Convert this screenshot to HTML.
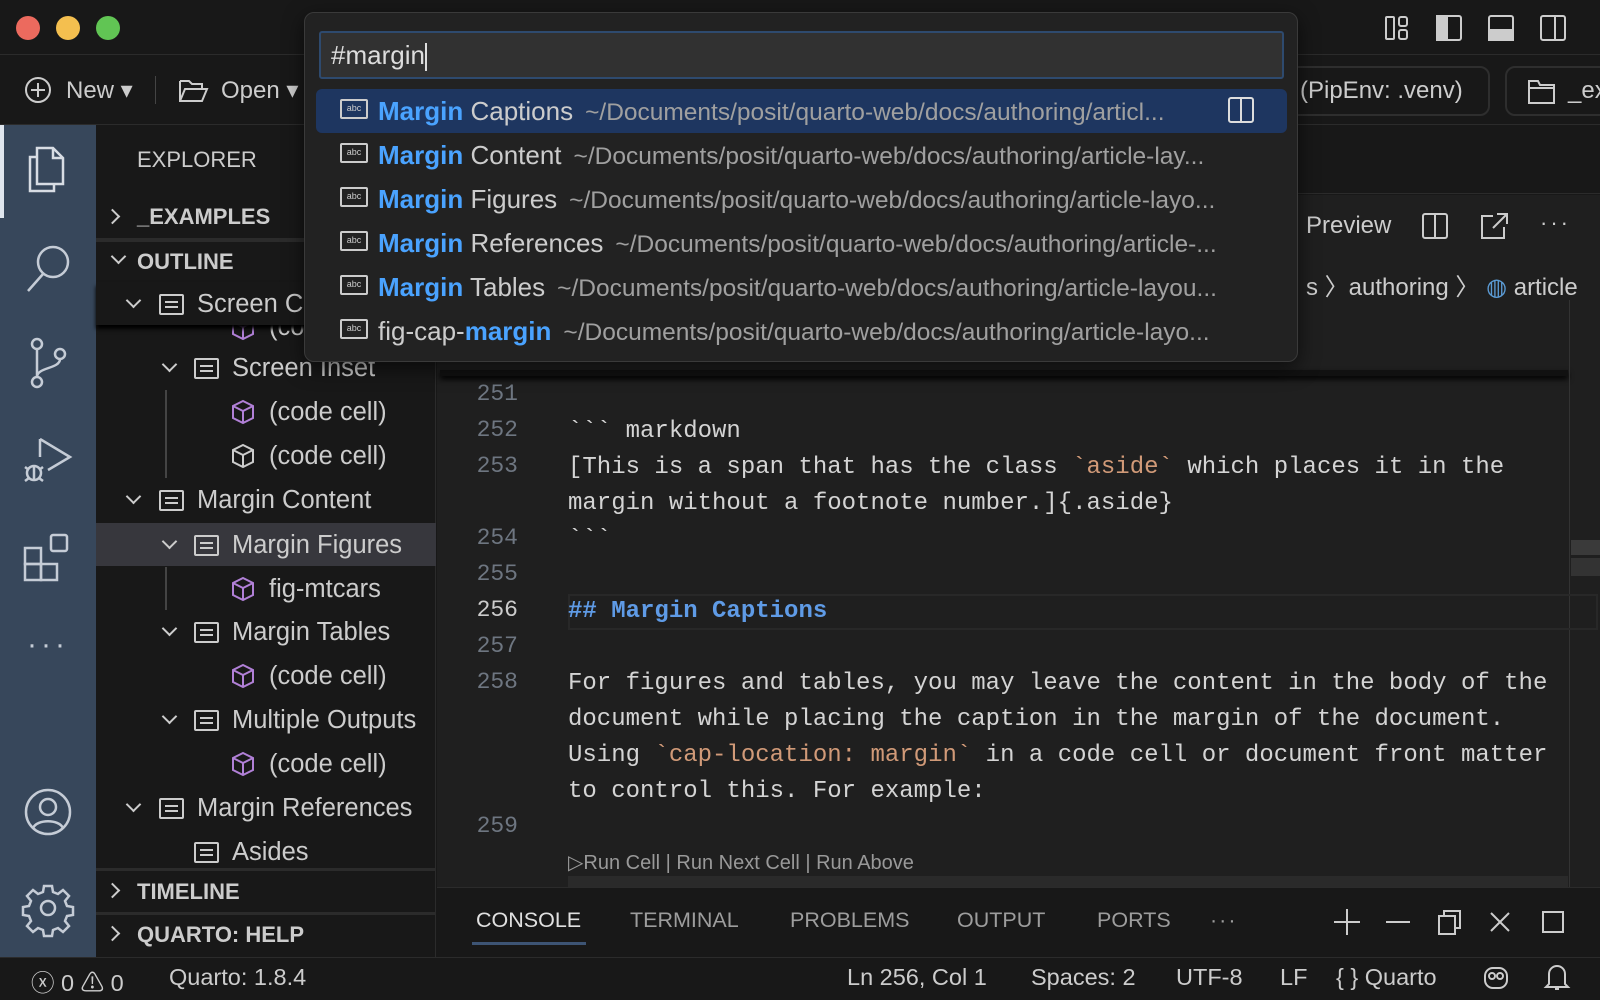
<!DOCTYPE html>
<html><head><meta charset="utf-8"><style>
*{margin:0;padding:0;box-sizing:border-box}
body{width:1600px;height:1000px;background:#181818;font-family:"Liberation Sans",sans-serif;color:#ccc;position:relative;overflow:hidden}
.a{position:absolute;white-space:nowrap}
.mono{font-family:"Liberation Mono",monospace;font-size:24px;color:#d4d4d4}
.ln{position:absolute;left:440px;width:78px;text-align:right;font-family:"Liberation Mono",monospace;font-size:23px;color:#6e7681}
.tr{position:absolute;font-size:25.5px;color:#ccc;white-space:nowrap;line-height:44px;height:44px}
.hd{position:absolute;font-size:22px;font-weight:bold;color:#ccc;white-space:nowrap}
svg{position:absolute;overflow:visible}
.qp{position:absolute;left:340px;height:44px;line-height:44px;font-size:26px;color:#ccc;white-space:nowrap}
.qp b{color:#4aa3ff;font-weight:bold}
.qp i{font-style:normal;color:#a0a0a0;font-size:24.5px;margin-left:12px}
.abc{display:inline-block;width:28px;height:20px;border:2px solid #ccc;border-radius:2px;font-size:9px;line-height:14px;text-align:center;vertical-align:middle;margin-right:10px;position:relative;top:-4px}
.pt{position:absolute;top:908px;font-size:21.5px;color:#9d9d9d}
.st{position:absolute;top:964px;font-size:23.5px;color:#ccc;white-space:nowrap}
.cd{position:absolute;width:11px;height:11px;border-right:2px solid #ccc;border-bottom:2px solid #ccc;transform:rotate(45deg)}
.cr{position:absolute;width:11px;height:11px;border-right:2px solid #ccc;border-bottom:2px solid #ccc;transform:rotate(-45deg)}
.ol{position:absolute;width:25px;height:21px;border:2px solid #ccc;border-radius:2px}
.ol:before,.ol:after{content:"";position:absolute;left:4px;right:4px;height:2px;background:#ccc}
.ol:before{top:5px}.ol:after{top:10px}
</style></head><body>
<!-- title bar -->
<div class="a" style="left:0;top:0;width:1600px;height:55px;background:#181818;border-bottom:1px solid #2b2b2b"></div>
<div class="a" style="left:16px;top:16px;width:24px;height:24px;border-radius:50%;background:#ec6a5e"></div>
<div class="a" style="left:56px;top:16px;width:24px;height:24px;border-radius:50%;background:#f4bf4f"></div>
<div class="a" style="left:96px;top:16px;width:24px;height:24px;border-radius:50%;background:#61c554"></div>
<svg style="left:1385px;top:16px" width="26" height="26" fill="none" stroke="#ccc" stroke-width="2"><rect x="1" y="1" width="8" height="22" rx="1"/><rect x="14" y="1" width="8" height="9" rx="2"/><rect x="14" y="14" width="8" height="9" rx="2"/></svg>
<svg style="left:1436px;top:15px" width="26" height="26" fill="none" stroke="#ccc" stroke-width="2"><rect x="1" y="1" width="24" height="24" rx="2"/><rect x="1" y="1" width="10" height="24" fill="#ccc"/></svg>
<svg style="left:1488px;top:15px" width="26" height="26" fill="none" stroke="#ccc" stroke-width="2"><rect x="1" y="1" width="24" height="24" rx="2"/><rect x="1" y="15" width="24" height="10" fill="#ccc"/></svg>
<svg style="left:1540px;top:15px" width="26" height="26" fill="none" stroke="#ccc" stroke-width="2"><rect x="1" y="1" width="24" height="24" rx="2"/><line x1="15" y1="1" x2="15" y2="25"/></svg>
<!-- toolbar -->
<div class="a" style="left:0;top:55px;width:1600px;height:70px;background:#181818;border-bottom:1px solid #2b2b2b"></div>
<svg style="left:25px;top:77px" width="26" height="26" fill="none" stroke="#ccc" stroke-width="2"><circle cx="13" cy="13" r="12"/><path d="M13 6v14M6 13h14"/></svg>
<div class="a" style="left:66px;top:76px;font-size:24px;color:#ccc">New ▾</div>
<div class="a" style="left:155px;top:76px;width:1px;height:28px;background:#444"></div>
<svg style="left:179px;top:79px" width="30" height="24" fill="none" stroke="#ccc" stroke-width="2"><path d="M1 2h9l3 3h10v4M1 2v20h22l5-12H6L1 22"/></svg>
<div class="a" style="left:221px;top:76px;font-size:24px;color:#ccc">Open ▾</div>
<div class="a" style="left:1200px;top:66px;width:290px;height:50px;border:2px solid #2e2e2e;border-radius:10px"></div>
<div class="a" style="left:1300px;top:77px;font-size:24px;color:#ccc">(PipEnv: .venv)</div>
<div class="a" style="left:1505px;top:66px;width:120px;height:50px;border:2px solid #2e2e2e;border-radius:10px"></div>
<svg style="left:1528px;top:80px" width="28" height="24" fill="none" stroke="#ccc" stroke-width="2"><path d="M1 1h9l2 4h14v18H1z M1 8h25"/></svg>
<div class="a" style="left:1568px;top:77px;font-size:24px;color:#ccc">_ex</div>
<!-- activity bar -->
<div class="a" style="left:0;top:125px;width:96px;height:832px;background:#37475b"></div>
<div class="a" style="left:0;top:125px;width:4px;height:93px;background:#dfe6ee"></div>
<svg style="left:27px;top:147px" width="44" height="48" fill="none" stroke="#d8dde4" stroke-width="2.5"><path d="M10 10h-7v34h24v-7"/><path d="M10 1h16l10 10v26H10z"/><path d="M26 1v10h10"/></svg>
<svg style="left:25px;top:244px" width="46" height="48" fill="none" stroke="#c5ccd6" stroke-width="2.5"><circle cx="28" cy="18" r="15"/><path d="M18 30L3 47"/></svg>
<svg style="left:30px;top:338px" width="40" height="50" fill="none" stroke="#c5ccd6" stroke-width="2.5"><circle cx="7" cy="6" r="5"/><circle cx="7" cy="44" r="5"/><circle cx="30" cy="16" r="5"/><path d="M7 11v28M30 21c0 10-23 8-23 18"/></svg>
<svg style="left:22px;top:437px" width="50" height="48" fill="none" stroke="#c5ccd6" stroke-width="2.5"><path d="M18 2v18M18 2l30 18-22 13"/><circle cx="12" cy="36" r="7"/><path d="M3 30l4 3M3 44l4-3M21 30l-4 3M21 44l-4-3M12 29v14"/></svg>
<svg style="left:23px;top:533px" width="50" height="50" fill="none" stroke="#c5ccd6" stroke-width="2.5"><rect x="2" y="15" width="16" height="16"/><rect x="2" y="31" width="16" height="16"/><rect x="18" y="31" width="16" height="16"/><rect x="28" y="2" width="16" height="16" rx="2"/></svg>
<div class="a" style="left:27px;top:628px;font-size:30px;color:#c5ccd6;letter-spacing:4px">···</div>
<svg style="left:24px;top:788px" width="48" height="48" fill="none" stroke="#c5ccd6" stroke-width="2.5"><circle cx="24" cy="24" r="22"/><circle cx="24" cy="19" r="8"/><path d="M9 40c4-9 26-9 30 0"/></svg>
<svg style="left:24px;top:884px" width="48" height="48" fill="none" stroke="#c5ccd6" stroke-width="2.5"><circle cx="24" cy="24" r="7"/><path d="M20 2h8l1 6 5 2 5-4 6 6-4 5 2 5 6 1v8l-6 1-2 5 4 5-6 6-5-4-5 2-1 6h-8l-1-6-5-2-5 4-6-6 4-5-2-5-6-1v-8l6-1 2-5-4-5 6-6 5 4 5-2z"/></svg>
<!-- sidebar -->
<div class="a" style="left:96px;top:125px;width:340px;height:832px;background:#181818;border-right:1px solid #2b2b2b"></div>
<div class="a" style="left:137px;top:147px;font-size:22px;color:#ccc">EXPLORER</div>
<div class="cr" style="left:107px;top:211px"></div>
<div class="hd" style="left:137px;top:204px">_EXAMPLES</div>
<div class="a" style="left:96px;top:238px;width:340px;height:4px;background:#2b2b2b"></div>
<div class="cd" style="left:113px;top:251px"></div>
<div class="hd" style="left:137px;top:249px">OUTLINE</div>
<svg style="left:232px;top:316px" width="22" height="24" fill="none" stroke="#b180d7" stroke-width="2"><path d="M11 1l10 5v12l-10 5-10-5V6z M1 6l10 5 10-5 M11 11v12"/></svg>
<div class="tr" style="left:269px;top:305px">(code cell)</div>
<div class="a" style="left:96px;top:282px;width:340px;height:43px;background:#181818;box-shadow:0 4px 4px #000"></div>
<div class="cd" style="left:128px;top:295px"></div><div class="ol" style="left:159px;top:294px"></div><div class="tr" style="left:197px;top:282px">Screen C</div>
<div class="a" style="left:165px;top:390px;width:2px;height:88px;background:#444"></div>
<div class="a" style="left:165px;top:567px;width:2px;height:43px;background:#444"></div>
<div class="a" style="left:96px;top:523px;width:340px;height:43px;background:#37373d"></div>
<div class="cd" style="left:164px;top:359px"></div><div class="ol" style="left:194px;top:358px"></div><div class="tr" style="left:232px;top:346px">Screen Inset</div>
<svg style="left:232px;top:400px" width="22" height="24" fill="none" stroke="#b180d7" stroke-width="2"><path d="M11 1l10 5v12l-10 5-10-5V6z M1 6l10 5 10-5 M11 11v12"/></svg><div class="tr" style="left:269px;top:390px">(code cell)</div>
<svg style="left:232px;top:444px" width="22" height="24" fill="none" stroke="#ccc" stroke-width="2"><path d="M11 1l10 5v12l-10 5-10-5V6z M1 6l10 5 10-5 M11 11v12"/></svg><div class="tr" style="left:269px;top:434px">(code cell)</div>
<div class="cd" style="left:128px;top:491px"></div><div class="ol" style="left:159px;top:490px"></div><div class="tr" style="left:197px;top:478px">Margin Content</div>
<div class="cd" style="left:164px;top:536px"></div><div class="ol" style="left:194px;top:535px"></div><div class="tr" style="left:232px;top:523px">Margin Figures</div>
<svg style="left:232px;top:577px" width="22" height="24" fill="none" stroke="#b180d7" stroke-width="2"><path d="M11 1l10 5v12l-10 5-10-5V6z M1 6l10 5 10-5 M11 11v12"/></svg><div class="tr" style="left:269px;top:567px">fig-mtcars</div>
<div class="cd" style="left:164px;top:623px"></div><div class="ol" style="left:194px;top:622px"></div><div class="tr" style="left:232px;top:610px">Margin Tables</div>
<svg style="left:232px;top:664px" width="22" height="24" fill="none" stroke="#b180d7" stroke-width="2"><path d="M11 1l10 5v12l-10 5-10-5V6z M1 6l10 5 10-5 M11 11v12"/></svg><div class="tr" style="left:269px;top:654px">(code cell)</div>
<div class="cd" style="left:164px;top:711px"></div><div class="ol" style="left:194px;top:710px"></div><div class="tr" style="left:232px;top:698px">Multiple Outputs</div>
<svg style="left:232px;top:752px" width="22" height="24" fill="none" stroke="#b180d7" stroke-width="2"><path d="M11 1l10 5v12l-10 5-10-5V6z M1 6l10 5 10-5 M11 11v12"/></svg><div class="tr" style="left:269px;top:742px">(code cell)</div>
<div class="cd" style="left:128px;top:799px"></div><div class="ol" style="left:159px;top:798px"></div><div class="tr" style="left:197px;top:786px">Margin References</div>
<div class="ol" style="left:194px;top:842px"></div><div class="tr" style="left:232px;top:830px">Asides</div>
<div class="a" style="left:96px;top:868px;width:340px;height:3px;background:#2b2b2b"></div>
<div class="cr" style="left:107px;top:885px"></div>
<div class="hd" style="left:137px;top:879px">TIMELINE</div>
<div class="a" style="left:96px;top:912px;width:340px;height:3px;background:#2b2b2b"></div>
<div class="cr" style="left:107px;top:928px"></div>
<div class="hd" style="left:137px;top:922px">QUARTO: HELP</div>
<!-- editor -->
<div class="a" style="left:437px;top:126px;width:1163px;height:68px;background:#181818;border-bottom:1px solid #2b2b2b"></div>
<div class="a" style="left:437px;top:195px;width:1163px;height:693px;background:#1f1f1f"></div>
<div class="a" style="left:1306px;top:212px;font-size:24px;color:#ccc">Preview</div>
<svg style="left:1422px;top:213px" width="26" height="26" fill="none" stroke="#ccc" stroke-width="2"><rect x="1" y="1" width="24" height="24" rx="2"/><line x1="13" y1="1" x2="13" y2="25"/></svg>
<svg style="left:1481px;top:213px" width="28" height="26" fill="none" stroke="#ccc" stroke-width="2"><path d="M12 3H1v22h22V14M16 1h10v10M26 1L12 15"/></svg>
<div class="a" style="left:1540px;top:210px;font-size:22px;color:#ccc;letter-spacing:3px">···</div>
<div class="a" style="left:1306px;top:267px;font-size:24px;color:#ccc">s 〉authoring 〉 <span style="color:#5b9bd5">◍</span> article</div>
<div class="a" style="left:440px;top:370px;width:1128px;height:6px;background:#111;box-shadow:0 3px 6px #000"></div>
<div class="a" style="left:1569px;top:300px;width:1px;height:588px;background:#333"></div>
<div class="a" style="left:1571px;top:540px;width:29px;height:15px;background:#3a3a3a"></div>
<div class="a" style="left:1571px;top:558px;width:29px;height:18px;background:#333"></div>
<div class="a" style="left:568px;top:594px;width:1030px;height:36px;border:2px solid #282828"></div>
<div class="ln" style="top:381px">251</div>
<div class="ln" style="top:417px">252</div>
<div class="ln" style="top:453px">253</div>
<div class="ln" style="top:525px">254</div>
<div class="ln" style="top:561px">255</div>
<div class="ln" style="top:597px;color:#ccc">256</div>
<div class="ln" style="top:633px">257</div>
<div class="ln" style="top:669px">258</div>
<div class="ln" style="top:813px">259</div>
<div class="a mono" style="left:568px;top:418px">&#96;&#96;&#96; markdown</div>
<div class="a mono" style="left:568px;top:454px">[This is a span that has the class <span style="color:#d19a78">&#96;aside&#96;</span> which places it in the</div>
<div class="a mono" style="left:568px;top:490px">margin without a footnote number.]{.aside}</div>
<div class="a mono" style="left:568px;top:526px">&#96;&#96;&#96;</div>
<div class="a mono" style="left:568px;top:598px;color:#5f9be6;font-weight:bold">## Margin Captions</div>
<div class="a mono" style="left:568px;top:670px">For figures and tables, you may leave the content in the body of the</div>
<div class="a mono" style="left:568px;top:706px">document while placing the caption in the margin of the document.</div>
<div class="a mono" style="left:568px;top:742px">Using <span style="color:#d19a78">&#96;cap-location: margin&#96;</span> in a code cell or document front matter</div>
<div class="a mono" style="left:568px;top:778px">to control this. For example:</div>
<div class="a" style="left:568px;top:850px;font-size:20px;color:#999">▷Run Cell | Run Next Cell | Run Above</div>
<div class="a" style="left:568px;top:876px;width:1000px;height:12px;background:#2a2a2a"></div>
<!-- panel -->
<div class="a" style="left:437px;top:887px;width:1163px;height:70px;background:#181818;border-top:1px solid #2b2b2b"></div>
<div class="pt" style="left:476px;color:#e0e0e0">CONSOLE</div>
<div class="a" style="left:472px;top:942px;width:114px;height:3px;background:#3d5474"></div>
<div class="pt" style="left:630px">TERMINAL</div>
<div class="pt" style="left:790px">PROBLEMS</div>
<div class="pt" style="left:957px">OUTPUT</div>
<div class="pt" style="left:1097px">PORTS</div>
<div class="pt" style="left:1210px;letter-spacing:2px">···</div>
<svg style="left:1334px;top:909px" width="26" height="26" stroke="#ccc" stroke-width="2"><path d="M13 0v26M0 13h26"/></svg>
<svg style="left:1386px;top:909px" width="24" height="26" stroke="#ccc" stroke-width="2"><path d="M0 13h24"/></svg>
<svg style="left:1438px;top:910px" width="24" height="26" fill="none" stroke="#ccc" stroke-width="2"><rect x="1" y="6" width="16" height="18"/><path d="M6 6V1h16v17h-5"/></svg>
<svg style="left:1490px;top:912px" width="20" height="20" stroke="#ccc" stroke-width="2"><path d="M1 1l18 18M19 1L1 19"/></svg>
<svg style="left:1542px;top:911px" width="22" height="22" fill="none" stroke="#ccc" stroke-width="2"><rect x="1" y="1" width="20" height="20"/></svg>
<!-- status bar -->
<div class="a" style="left:0;top:957px;width:1600px;height:43px;background:#181818;border-top:1px solid #2b2b2b"></div>
<div class="st" style="left:31px">ⓧ 0 ⚠ 0</div>
<div class="st" style="left:169px">Quarto: 1.8.4</div>
<div class="st" style="left:847px">Ln 256, Col 1</div>
<div class="st" style="left:1031px">Spaces: 2</div>
<div class="st" style="left:1176px">UTF-8</div>
<div class="st" style="left:1280px">LF</div>
<div class="st" style="left:1336px">{ } Quarto</div>
<svg style="left:1483px;top:966px" width="26" height="24" fill="none" stroke="#ccc" stroke-width="2"><rect x="2" y="2" width="22" height="20" rx="8"/><circle cx="9" cy="10" r="3"/><circle cx="17" cy="10" r="3"/></svg>
<svg style="left:1545px;top:964px" width="24" height="28" fill="none" stroke="#ccc" stroke-width="2"><path d="M4 20V10a8 8 0 0116 0v10l3 3H1z M10 25h4"/></svg>
<!-- quick pick -->
<div class="a" style="left:304px;top:12px;width:994px;height:350px;background:#222;border:1px solid #3a3a3a;border-radius:10px;box-shadow:0 6px 20px rgba(0,0,0,.6)"></div>
<div class="a" style="left:319px;top:31px;width:965px;height:48px;background:#313131;border:2px solid #2e4a6e;border-radius:3px"></div>
<div class="a" style="left:331px;top:40px;font-size:26px;color:#ddd">#margin<span style="display:inline-block;width:2px;height:28px;background:#ddd;vertical-align:middle"></span></div>
<div class="a" style="left:316px;top:89px;width:971px;height:44px;background:#1e3660;border-radius:6px"></div>
<div class="qp" style="top:89px"><span class="abc">abc</span><b>Margin</b> Captions<i>~/Documents/posit/quarto-web/docs/authoring/articl...</i></div>
<svg style="left:1228px;top:97px" width="26" height="26" fill="none" stroke="#ddd" stroke-width="2"><rect x="1" y="1" width="24" height="24" rx="2"/><line x1="13" y1="1" x2="13" y2="25"/></svg>
<div class="qp" style="top:133px"><span class="abc">abc</span><b>Margin</b> Content<i>~/Documents/posit/quarto-web/docs/authoring/article-lay...</i></div>
<div class="qp" style="top:177px"><span class="abc">abc</span><b>Margin</b> Figures<i>~/Documents/posit/quarto-web/docs/authoring/article-layo...</i></div>
<div class="qp" style="top:221px"><span class="abc">abc</span><b>Margin</b> References<i>~/Documents/posit/quarto-web/docs/authoring/article-...</i></div>
<div class="qp" style="top:265px"><span class="abc">abc</span><b>Margin</b> Tables<i>~/Documents/posit/quarto-web/docs/authoring/article-layou...</i></div>
<div class="qp" style="top:309px"><span class="abc">abc</span>fig-cap-<b>margin</b><i>~/Documents/posit/quarto-web/docs/authoring/article-layo...</i></div>
</body></html>
